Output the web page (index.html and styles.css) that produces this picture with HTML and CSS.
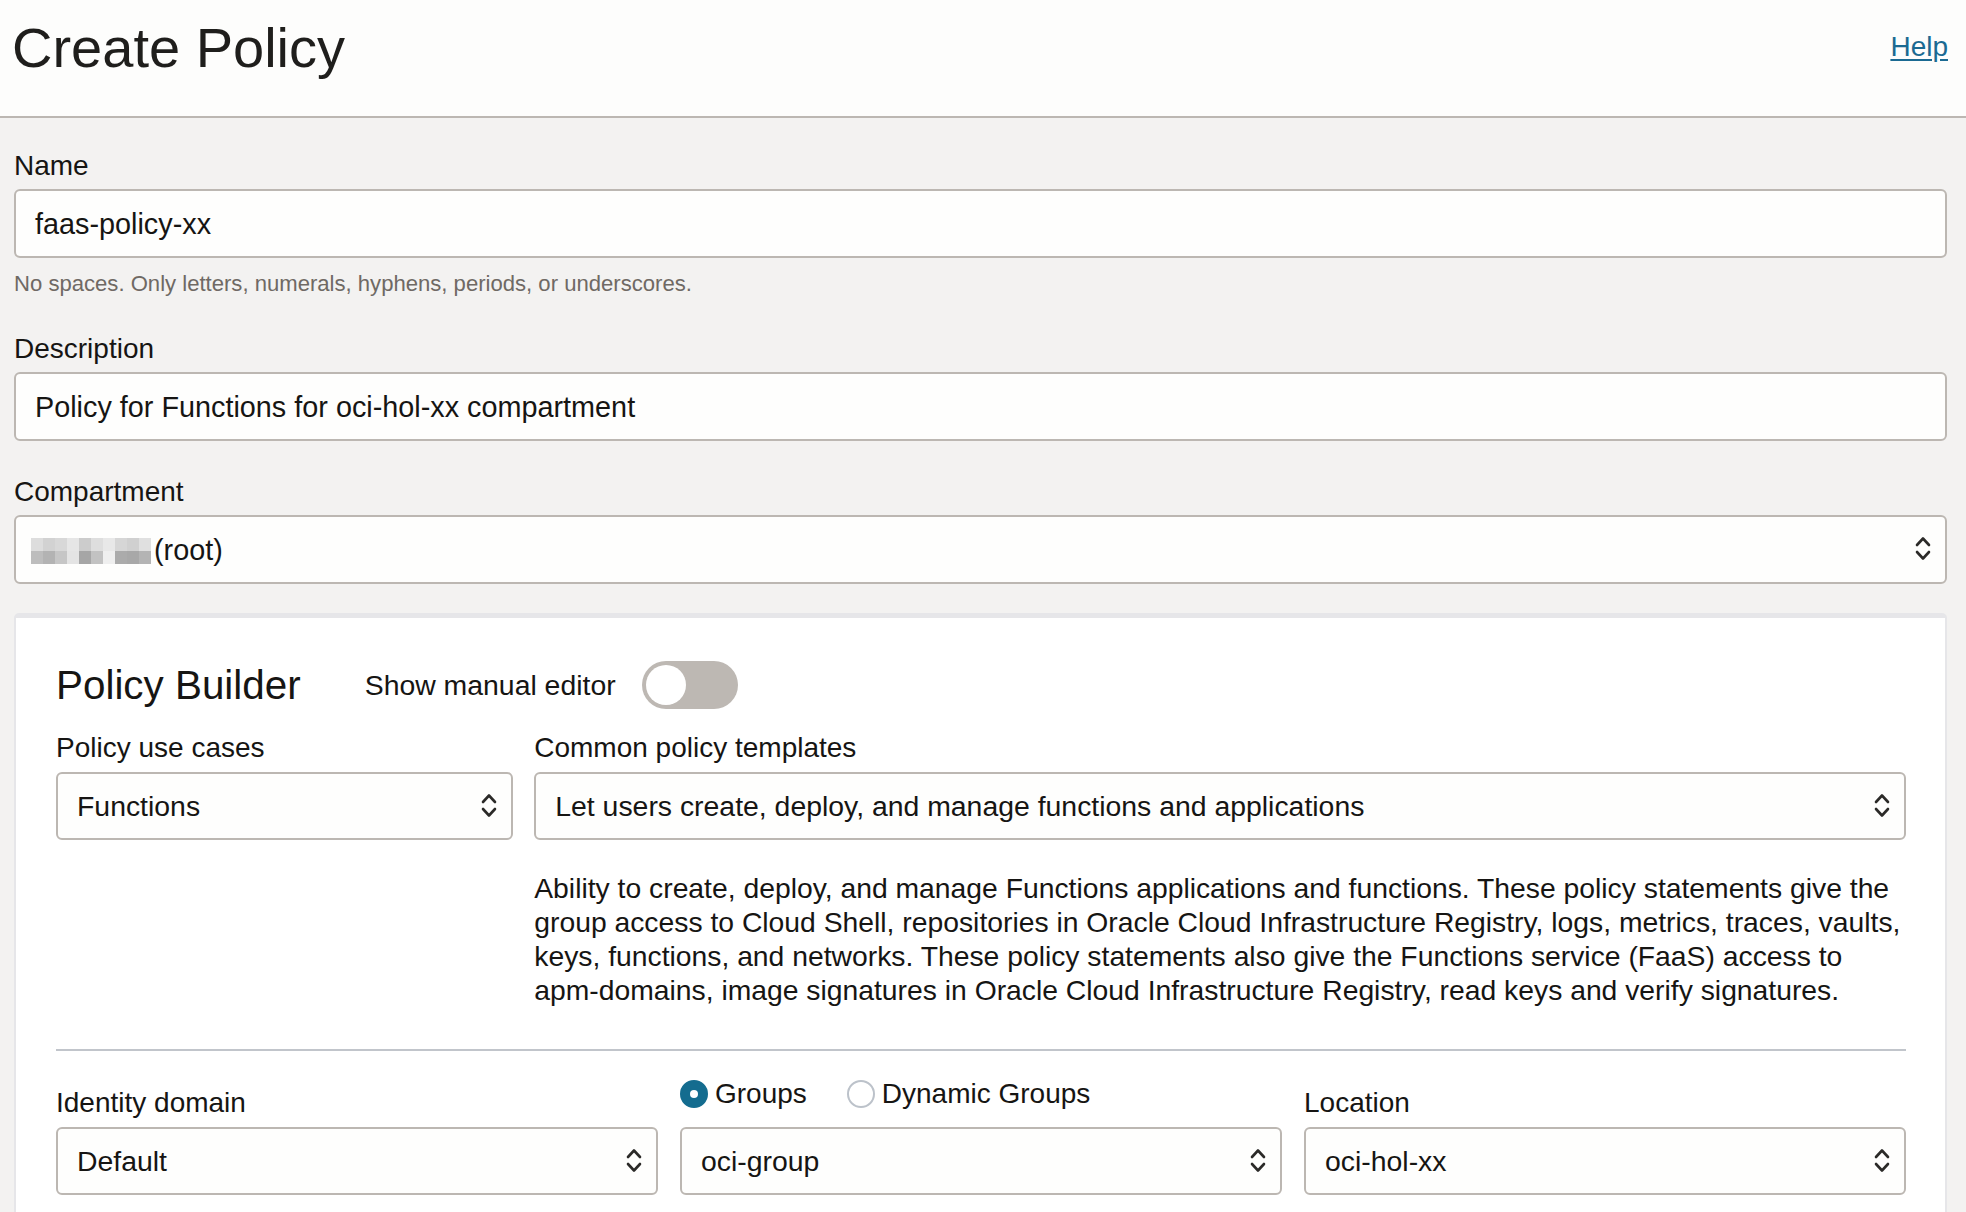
FILE: index.html
```html
<!DOCTYPE html>
<html lang="en">
<head>
<meta charset="utf-8">
<title>Create Policy</title>
<link rel="stylesheet" href="styles.css">
</head>
<body>
<header class="page-header">
  <h1 class="page-title">Create Policy</h1>
  <a class="help-link" href="#">Help</a>
</header>
<main class="page-body">
  <label class="field-label">Name</label>
  <div class="text-box">faas-policy-xx</div>
  <div class="helper">No spaces. Only letters, numerals, hyphens, periods, or underscores.</div>

  <label class="field-label label-desc">Description</label>
  <div class="text-box">Policy for Functions for oci-hol-xx compartment</div>

  <label class="field-label label-comp">Compartment</label>
  <div class="text-box select-box">
    <span class="select-value">
      <svg class="blur" width="120" height="26" viewBox="0 0 120 26">
        <rect x="0" y="0" width="12" height="13" fill="#dddddd"/>
        <rect x="12" y="0" width="12" height="13" fill="#d2d2d2"/>
        <rect x="24" y="0" width="12" height="13" fill="#d8d8d8"/>
        <rect x="36" y="0" width="12" height="13" fill="#e6e6e6"/>
        <rect x="48" y="0" width="12" height="13" fill="#cccccc"/>
        <rect x="60" y="0" width="12" height="13" fill="#dedede"/>
        <rect x="72" y="0" width="12" height="13" fill="#e8e8e8"/>
        <rect x="84" y="0" width="12" height="13" fill="#d6d6d6"/>
        <rect x="96" y="0" width="12" height="13" fill="#d0d0d0"/>
        <rect x="108" y="0" width="12" height="13" fill="#e0e0e0"/>
        <rect x="0" y="13" width="12" height="13" fill="#bdbdbd"/>
        <rect x="12" y="13" width="12" height="13" fill="#b3b3b3"/>
        <rect x="24" y="13" width="12" height="13" fill="#c6c6c6"/>
        <rect x="36" y="13" width="12" height="13" fill="#e4e4e4"/>
        <rect x="48" y="13" width="12" height="13" fill="#a6a6a6"/>
        <rect x="60" y="13" width="12" height="13" fill="#c2c2c2"/>
        <rect x="72" y="13" width="12" height="13" fill="#efefef"/>
        <rect x="84" y="13" width="12" height="13" fill="#ababab"/>
        <rect x="96" y="13" width="12" height="13" fill="#a8a8a8"/>
        <rect x="108" y="13" width="12" height="13" fill="#b4b4b4"/>
      </svg>(root)</span>
    <svg class="chev" width="16" height="27" viewBox="0 0 16 27"><path d="M2 10 L8 3.5 L14 10 M2 17 L8 23.5 L14 17" fill="none" stroke="#2b2a28" stroke-width="2.6" stroke-linecap="round" stroke-linejoin="round"/></svg>
  </div>

  <section class="builder">
    <div class="builder-head">
      <h2 class="builder-title">Policy Builder</h2>
      <span class="toggle-label">Show manual editor</span>
      <span class="toggle"><span class="knob"></span></span>
    </div>

    <div class="grid-top">
      <div class="col">
        <label class="field-label">Policy use cases</label>
        <div class="text-box select-box short">
          <span class="select-value">Functions</span>
          <svg class="chev" width="16" height="27" viewBox="0 0 16 27"><path d="M2 10 L8 3.5 L14 10 M2 17 L8 23.5 L14 17" fill="none" stroke="#2b2a28" stroke-width="2.6" stroke-linecap="round" stroke-linejoin="round"/></svg>
        </div>
      </div>
      <div class="col">
        <label class="field-label">Common policy templates</label>
        <div class="text-box select-box short">
          <span class="select-value">Let users create, deploy, and manage functions and applications</span>
          <svg class="chev" width="16" height="27" viewBox="0 0 16 27"><path d="M2 10 L8 3.5 L14 10 M2 17 L8 23.5 L14 17" fill="none" stroke="#2b2a28" stroke-width="2.6" stroke-linecap="round" stroke-linejoin="round"/></svg>
        </div>
        <p class="template-desc">Ability to create, deploy, and manage Functions applications and functions. These policy statements give the group access to Cloud Shell, repositories in Oracle Cloud Infrastructure Registry, logs, metrics, traces, vaults, keys, functions, and networks. These policy statements also give the Functions service (FaaS) access to <span class="nowrap">apm-domains,</span> image signatures in Oracle Cloud Infrastructure Registry, read keys and verify signatures.</p>
      </div>
    </div>

    <hr class="divider">

    <div class="grid-bottom">
      <div class="col">
        <label class="field-label">Identity domain</label>
        <div class="text-box select-box short">
          <span class="select-value">Default</span>
          <svg class="chev" width="16" height="27" viewBox="0 0 16 27"><path d="M2 10 L8 3.5 L14 10 M2 17 L8 23.5 L14 17" fill="none" stroke="#2b2a28" stroke-width="2.6" stroke-linecap="round" stroke-linejoin="round"/></svg>
        </div>
      </div>
      <div class="col">
        <div class="radio-row">
          <span class="radio-opt"><span class="radio checked"></span>Groups</span>
          <span class="radio-opt"><span class="radio"></span>Dynamic Groups</span>
        </div>
        <div class="text-box select-box short">
          <span class="select-value">oci-group</span>
          <svg class="chev" width="16" height="27" viewBox="0 0 16 27"><path d="M2 10 L8 3.5 L14 10 M2 17 L8 23.5 L14 17" fill="none" stroke="#2b2a28" stroke-width="2.6" stroke-linecap="round" stroke-linejoin="round"/></svg>
        </div>
      </div>
      <div class="col">
        <label class="field-label">Location</label>
        <div class="text-box select-box short">
          <span class="select-value">oci-hol-xx</span>
          <svg class="chev" width="16" height="27" viewBox="0 0 16 27"><path d="M2 10 L8 3.5 L14 10 M2 17 L8 23.5 L14 17" fill="none" stroke="#2b2a28" stroke-width="2.6" stroke-linecap="round" stroke-linejoin="round"/></svg>
        </div>
      </div>
    </div>
  </section>
</main>
</body>
</html>
```

FILE: styles.css
```css
* { box-sizing: border-box; }

html, body {
  margin: 0;
  padding: 0;
  background: #f3f2f1;
  font-family: "Liberation Sans", Arial, Helvetica, sans-serif;
  color: #161513;
}

.page-header {
  display: flex;
  justify-content: space-between;
  align-items: flex-start;
  height: 118px;
  padding: 16px 18px 0 12px;
  background: #fdfdfc;
  border-bottom: 2px solid #bcb7b2;
}

.page-title {
  margin: 0;
  font-size: 56px;
  line-height: 64px;
  font-weight: normal;
  color: #1f1e1c;
}

.help-link {
  margin-top: 15px;
  font-size: 28px;
  line-height: 32px;
  color: #1b6a92;
  text-decoration: underline;
  text-underline-offset: 3px;
}

.page-body {
  padding: 32px 19px 0 14px;
  height: 1094px;
  overflow: hidden;
}

.field-label {
  display: block;
  font-size: 28px;
  line-height: 32px;
  margin-bottom: 7px;
}

.label-desc { margin-top: 36px; }
.label-comp { margin-top: 35px; }

.text-box {
  display: flex;
  align-items: center;
  height: 69px;
  padding: 0 14px 0 19px;
  background: #fefefd;
  border: 2px solid #bcb7b2;
  border-radius: 6px;
  font-size: 28.8px;
  line-height: 32px;
}

.text-box.short { height: 68px; font-size: 28.4px; }

.select-box { justify-content: space-between; }

.select-value {
  display: flex;
  align-items: center;
  white-space: nowrap;
}

.blur {
  display: block;
  margin: 2px 3px 0 -4px;
}

.chev {
  display: block;
  flex: none;
  margin-top: -2px;
}

.helper {
  margin-top: 13px;
  font-size: 22.1px;
  line-height: 26px;
  color: #6f6964;
}

.builder {
  margin-top: 29px;
  background: #ffffff;
  border: 2px solid #e6e6e9;
  border-top-width: 5px;
  border-radius: 5px 5px 0 0;
  padding: 43px 39px 0 40px;
  min-height: 620px;
}

.builder-head {
  display: flex;
  align-items: center;
  height: 48px;
}

.builder-title {
  margin: 0 64px 0 0;
  font-size: 40.4px;
  line-height: 48px;
  font-weight: normal;
}

.toggle-label {
  font-size: 28.4px;
  line-height: 32px;
  margin-right: 26px;
}

.toggle {
  position: relative;
  display: block;
  width: 96px;
  height: 48px;
  border-radius: 24px;
  background: #bdb8b3;
}

.knob {
  position: absolute;
  left: 4px;
  top: 4px;
  width: 40px;
  height: 40px;
  border-radius: 50%;
  background: #ffffff;
}

.grid-top {
  display: grid;
  grid-template-columns: 1fr 3fr;
  column-gap: 21px;
  margin-top: 23px;
}

.grid-top .field-label { margin-bottom: 8px; }

.template-desc {
  margin: 31px 0 0 0;
  font-size: 28.3px;
  line-height: 34px;
  color: #161513;
}

.nowrap { white-space: nowrap; }

.divider {
  margin: 42px 0 0 0;
  height: 2px;
  border: 0;
  background: #c1c5cb;
}

.grid-bottom {
  display: grid;
  grid-template-columns: 1fr 1fr 1fr;
  column-gap: 22px;
  align-items: end;
  margin-top: 27px;
}

.grid-bottom .field-label { margin-bottom: 8px; }

.radio-row {
  display: flex;
  align-items: center;
  height: 32px;
  margin: 0 0 17px 0;
  font-size: 28px;
  line-height: 32px;
}

.radio-opt {
  display: flex;
  align-items: center;
  margin-right: 40px;
}

.radio {
  display: block;
  width: 28px;
  height: 28px;
  border-radius: 50%;
  margin-right: 7px;
  background: #ffffff;
  border: 2px solid #bcc2ca;
  position: relative;
}

.radio.checked {
  background: #146c8f;
  border-color: #146c8f;
}

.radio.checked::after {
  content: "";
  position: absolute;
  left: 8px;
  top: 8px;
  width: 8px;
  height: 8px;
  border-radius: 50%;
  background: #ffffff;
}
```
